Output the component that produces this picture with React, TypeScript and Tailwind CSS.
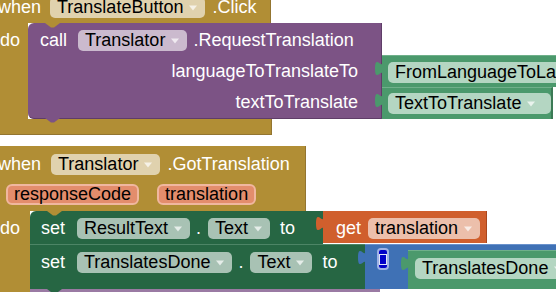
import React from "react";

const GOLD = "#b18e35";

const Arrow = () => (
  <svg width="8" height="6" viewBox="0 0 8 6" className="ml-[6px] mr-[8px] shrink-0">
    <path d="M0,0.5 H8 L4,5.5 Z" fill="#ffffff" fillOpacity="0.7" />
  </svg>
);

function Pill({ text, className, arrow = true }: { text: string; className: string; arrow?: boolean }) {
  return (
    <span className={`flex items-center h-[21px] rounded-[5px] pl-[7px] text-black whitespace-nowrap ${arrow ? "" : "pr-[7px]"} ${className}`}>
      <span className="leading-[21px]">{text}</span>
      {arrow && <Arrow />}
    </span>
  );
}

function Param({ text, className = "" }: { text: string; className?: string }) {
  return (
    <span className={`flex items-center h-[21px] px-[6px] rounded-[6px] bg-[#e38d6c] border-2 border-[#f0b79f] text-black leading-[17px] whitespace-nowrap ${className}`}>
      {text}
    </span>
  );
}

const Label = ({ children, className = "" }: { children: React.ReactNode; className?: string }) => (
  <span className={`text-white whitespace-nowrap leading-[21px] ${className}`}>{children}</span>
);

// value input tab on the left side of a value block
const Tab = ({ fill }: { fill: string }) => (
  <svg width="10" height="21" viewBox="0 0 10 21" className="absolute left-[-9px] top-0">
    <path d="M10,0 V5 C10,15 2,-3 2,12.5 C2,28 10,10 10,20 V0 Z" fill={fill} />
  </svg>
);

// statement notch (top cut / bottom bump)
const Notch = ({ fill, className }: { fill: string; className: string }) => (
  <svg width="15" height="5" viewBox="0 0 15 5" className={`absolute left-[17px] ${className}`}>
    <path d="M0,0 L6,4.5 H9 L15,0 Z" fill={fill} />
  </svg>
);

function ClickBlock() {
  return (
    <div className="flex flex-col items-start">
      {/* header */}
      <div className="flex items-start w-[281px] h-[34px] pt-[8px] pl-[8px] bg-[#b18e35] border-r border-[#937530]">
        <Label>when</Label>
        <Pill text="TranslateButton" className="ml-[9px] bg-[#e0d2ae]" />
        <Label className="ml-[7px]">.Click</Label>
      </div>

      {/* body */}
      <div className="flex">
        <div className="w-[38px] pt-[7px] pl-[10px] bg-[#b18e35] text-white leading-[21px]">do</div>
        <div className="flex flex-col">
          <div className="flex">
            <div className="relative flex items-start w-[354px] h-[32px] pt-[7px] pl-[12px] bg-[#7c5385] rounded-tl-[6px] border-r border-[#5f3d68]">
              <Notch fill={GOLD} className="top-0" />
              <Label>call</Label>
              <Pill text="Translator" className="ml-[11px] bg-[#cbbace]" />
              <Label className="ml-[6px]">.RequestTranslation</Label>
            </div>
          </div>
          <div className="flex">
            <div className="flex items-center justify-end w-[354px] h-[32px] pr-[23px] bg-[#7c5385] border-r border-[#5f3d68]">
              <Label>languageToTranslateTo</Label>
            </div>
            <div className="relative w-[190px] h-[32px] pt-[6px] pl-[6px] bg-[#4b996c] border-t border-[#6fb08a]">
              <Tab fill="#4b996c" />
              <Pill text="FromLanguageToLanguage" arrow={false} className="bg-[#b4d6c2]" />
            </div>
          </div>
          <div className="flex">
            <div className="relative flex items-center justify-end w-[354px] h-[32px] pr-[23px] bg-[#7c5385] rounded-bl-[6px] border-r border-b border-[#5f3d68]">
              <Notch fill="#7c5385" className="top-full" />
              <Label>textToTranslate</Label>
            </div>
            <div className="relative w-[171px] h-[32px] pt-[5px] pl-[6px] bg-[#4b996c] border-t border-[#6fb08a] border-r-2 border-r-[#3b7a55]">
              <Tab fill="#4b996c" />
              <Pill text="TextToTranslate" className="bg-[#b4d6c2]" />
            </div>
          </div>
        </div>
      </div>

      {/* footer */}
      <div className="w-[282px] h-[16px] bg-[#b18e35] border-r border-b border-[#937530]" />
    </div>
  );
}

function GotTranslationBlock() {
  return (
    <div className="flex flex-col items-start">
      {/* header with params */}
      <div className="flex flex-col w-[316px] h-[65px] pt-[8px] bg-[#b18e35] border-r border-[#937530]">
        <div className="flex items-center pl-[8px]">
          <Label>when</Label>
          <Pill text="Translator" className="ml-[10px] bg-[#e0d2ae]" />
          <Label className="ml-[7px]">.GotTranslation</Label>
        </div>
        <div className="flex items-center mt-[9px] pl-[16px]">
          <Param text="responseCode" />
          <Param text="translation" className="ml-[18px]" />
        </div>
      </div>

      {/* body */}
      <div className="flex">
        <div className="w-[40px] pt-[7px] pl-[10px] bg-[#b18e35] text-white leading-[21px]">do</div>
        <div className="flex flex-col">
          {/* set ResultText.Text to get translation */}
          <div className="flex items-start">
            <div className="relative flex items-start w-[293px] h-[33px] pt-[7px] pl-[11px] bg-[#266643] rounded-tl-[6px]">
              <Notch fill={GOLD} className="top-0" />
              <Label>set</Label>
              <Pill text="ResultText" className="ml-[12px] bg-[#a8c2b4]" />
              <Label className="ml-[6px]">.</Label>
              <Pill text="Text" className="ml-[7px] bg-[#a8c2b4]" />
              <Label className="ml-[10px]">to</Label>
            </div>
            <div className="relative flex items-start w-[164px] h-[32px] pt-[7px] pl-[13px] bg-[#d05f2d] border-r border-[#a9461d]">
              <Tab fill="#d05f2d" />
              <Label>get</Label>
              <Pill text="translation" className="ml-[7px] bg-[#ecbfab]" />
            </div>
          </div>

          {/* set TranslatesDone.Text to ... */}
          <div className="flex items-start">
            <div className="relative flex items-start w-[335px] h-[45px] pt-[7px] pl-[11px] bg-[#266643] border-t border-[#4d8566]">
              <Label>set</Label>
              <Pill text="TranslatesDone" className="ml-[12px] bg-[#a8c2b4]" />
              <Label className="ml-[6px]">.</Label>
              <Pill text="Text" className="ml-[7px] bg-[#a8c2b4]" />
              <Label className="ml-[10px]">to</Label>
            </div>
            <div className="relative flex items-start w-[200px] h-[45px] pl-[12px] bg-[#3f71b5] border-t border-[#6a92cc]">
              <Tab fill="#3f71b5" />
              <div className="flex items-center justify-center w-[21px] h-[22px] mt-[3px] rounded-[4px] bg-[#0000c8] border-2 border-[#9fb2e6]">
                <div className="w-[8px] h-[11px] border-[1.5px] border-[#dfe5f7]" />
              </div>
              <div className="relative w-[160px] h-[39px] ml-[19px] mt-[5px] pt-[7px] pl-[7px] bg-[#4b996c] border-t border-[#6fb08a]">
                <Tab fill="#4b996c" />
                <Pill text="TranslatesDone" className="bg-[#b4d6c2]" />
              </div>
            </div>
          </div>

          {/* next statement, mostly out of view */}
          <div className="relative w-[350px] h-[10px] bg-[#9a7aa3]">
            <Notch fill="#266643" className="top-0" />
          </div>
        </div>
      </div>
    </div>
  );
}

export default function App() {
  return (
    <div className="w-[556px] h-[292px] overflow-hidden bg-white font-['Liberation_Sans',Arial,sans-serif] text-[18px] leading-[21px]">
      <div className="flex flex-col items-start -ml-[10px] -mt-[11px]">
        <ClickBlock />
        <div className="h-[11px]" />
        <GotTranslationBlock />
      </div>
    </div>
  );
}
